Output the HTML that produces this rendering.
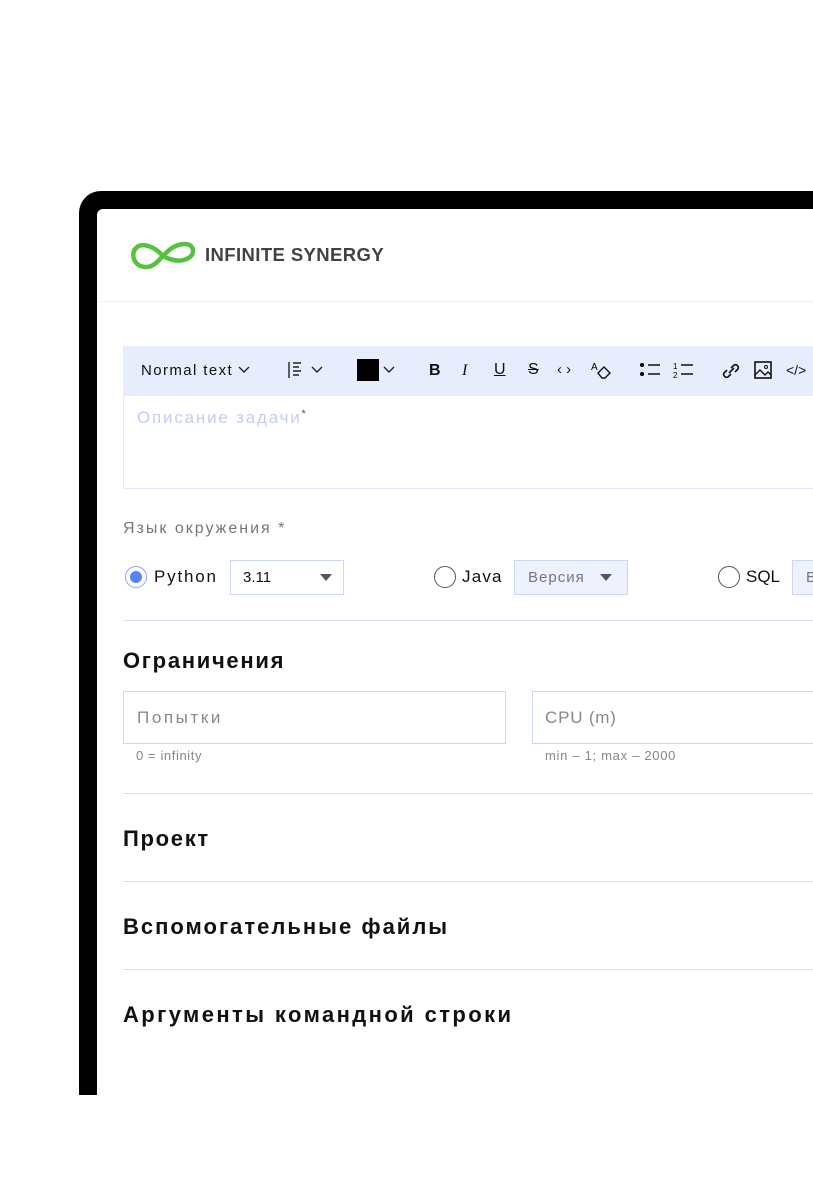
<!DOCTYPE html>
<html><head><meta charset="utf-8"><style>
*{margin:0;padding:0;box-sizing:border-box}
body{width:813px;height:1200px;background:#fff;position:relative;overflow:hidden;font-family:"Liberation Sans","DejaVu Sans",sans-serif}
.a{position:absolute}
.frame{left:79px;top:191px;width:800px;height:904px;background:#000;border-top-left-radius:22px}
.inner{left:97px;top:209px;width:760px;height:886px;background:#fff;border-top-left-radius:6px}
.t{position:absolute;white-space:nowrap;line-height:1}
.h{font-weight:bold;font-size:22px;color:#111;letter-spacing:1.7px}
.line{position:absolute;left:123px;width:700px;height:1px;background:#d9e1fa}
.radio{position:absolute;width:22px;height:22px;border:1.5px solid #555;border-radius:50%}
.sel{position:absolute;height:35px;border:1.5px solid #ccd7f8;top:560px}
.tri{position:absolute;width:0;height:0;border-left:6px solid transparent;border-right:6px solid transparent;border-top:7px solid #555;top:574px}
.ic{position:absolute;top:360px}
</style></head><body>
<div class="a frame"></div>
<div class="a inner"></div>
<svg class="a" style="left:130px;top:240px" width="66" height="32" viewBox="0 0 66 32"><path d="M33 16 C24 6 12 2 6 8 C0 14 4 27 16 27 C24 27 29 20 33 16 C38 11 44 4 55 4 C64 4 65 13 60 17 C55 21 45 23 33 16" fill="none" stroke="#55c33b" stroke-width="4.5" stroke-linecap="round"/></svg>
<div class="t" style="left:205px;top:246px;font-size:18.5px;font-weight:bold;color:#3f4247;letter-spacing:0.4px">INFINITE SYNERGY</div>
<div class="a" style="left:97px;top:301px;width:716px;height:1px;background:#eef0f3"></div>
<div class="a" style="left:123px;top:346px;width:700px;height:143px;border:1px solid #e3e9f8"></div>
<div class="a" style="left:123px;top:346px;width:700px;height:50px;background:#e8edfd"></div>
<div class="t" style="left:141px;top:363px;font-size:15px;color:#111;letter-spacing:1.4px">Normal text</div>
<svg class="ic" style="left:237px" width="14" height="20"><path d="M2 7l5 5 5-5" fill="none" stroke="#222" stroke-width="1.4"/></svg>
<svg class="ic" style="left:287px" width="40" height="20"><path d="M2 2v16M6 3h8M6 7h6M6 11h8M6 15h6" stroke="#222" stroke-width="1.4"/><path d="M25 7l5 5 5-5" fill="none" stroke="#222" stroke-width="1.4"/></svg>
<div class="a" style="left:357px;top:359px;width:22px;height:22px;background:#000"></div>
<svg class="ic" style="left:383px" width="14" height="20"><path d="M1 7l5 5 5-5" fill="none" stroke="#222" stroke-width="1.4"/></svg>
<div class="t" style="left:429px;top:363px;font-size:16px;font-weight:bold;color:#111">B</div>
<div class="t" style="left:462px;top:363px;font-size:16px;font-style:italic;color:#111;font-family:'Liberation Serif',serif">I</div>
<div class="t" style="left:494px;top:362px;font-size:16px;color:#111;text-decoration:underline">U</div>
<div class="t" style="left:528px;top:362px;font-size:16px;color:#111;text-decoration:line-through">S</div>
<div class="t" style="left:557px;top:362px;font-size:15px;color:#111">‹ ›</div>
<svg class="ic" style="left:590px" width="22" height="22"><text x="1" y="10" font-size="10" font-family="Liberation Sans">A</text><path d="M8 13l6-6 6 6-5 5h-3z" fill="none" stroke="#111" stroke-width="1.4"/></svg>
<svg class="ic" style="left:639px" width="24" height="20"><circle cx="3" cy="5" r="2"/><circle cx="3" cy="14" r="2"/><path d="M9 5h12M9 14h12" stroke="#111" stroke-width="1.5"/></svg>
<svg class="ic" style="left:672px" width="24" height="20"><text x="1" y="9" font-size="8">1</text><text x="1" y="18" font-size="8">2</text><path d="M9 5h12M9 14h12" stroke="#111" stroke-width="1.5"/></svg>
<svg class="ic" style="left:719px" width="24" height="22"><path d="M10 13l5-5M8 10l-3 3a3 3 0 004 4l3-3M16 12l3-3a3 3 0 00-4-4l-3 3" fill="none" stroke="#111" stroke-width="1.6"/></svg>
<svg class="ic" style="left:753px" width="22" height="22"><rect x="2" y="2" width="16" height="16" fill="none" stroke="#111" stroke-width="1.6"/><path d="M2 15l5-5 5 5 3-3 3 3" fill="none" stroke="#111" stroke-width="1.4"/><circle cx="13" cy="7" r="1.5" fill="none" stroke="#111"/></svg>
<div class="t" style="left:786px;top:363px;font-size:14px;color:#111">&lt;/&gt;</div>
<div class="t" style="left:137px;top:409px;font-size:17px;color:#c5cdf5;letter-spacing:1.8px">Описание задачи<span style="font-size:11px;color:#555;vertical-align:top">*</span></div>
<div class="t" style="left:123px;top:521px;font-size:16px;color:#777;letter-spacing:2px">Язык окружения *</div>
<div class="radio" style="left:125px;top:566px;border-color:#8aa3f7"></div>
<div class="a" style="left:130px;top:571px;width:12px;height:12px;border-radius:50%;background:#5b82f8"></div>
<div class="t" style="left:154px;top:568px;font-size:17px;color:#111;letter-spacing:1.8px">Python</div>
<div class="sel" style="left:230px;width:114px"></div>
<div class="t" style="left:243px;top:570px;font-size:15px;color:#111">3.11</div>
<div class="tri" style="left:320px"></div>
<div class="radio" style="left:434px;top:566px"></div>
<div class="t" style="left:462px;top:568px;font-size:17px;color:#111;letter-spacing:1.2px">Java</div>
<div class="sel" style="left:514px;width:114px;background:#eef2fd"></div>
<div class="t" style="left:528px;top:570px;font-size:15px;color:#777;letter-spacing:1px">Версия</div>
<div class="tri" style="left:600px"></div>
<div class="radio" style="left:718px;top:566px"></div>
<div class="t" style="left:746px;top:568px;font-size:17px;color:#111">SQL</div>
<div class="sel" style="left:792px;width:60px;background:#eef2fd"></div>
<div class="t" style="left:806px;top:570px;font-size:15px;color:#777">В</div>
<div class="line" style="top:620px"></div>
<div class="t h" style="left:123px;top:650px">Ограничения</div>
<div class="a" style="left:123px;top:691px;width:383px;height:53px;border:1.5px solid #ccd7f8"></div>
<div class="t" style="left:137px;top:709px;font-size:17px;color:#888;letter-spacing:2.6px">Попытки</div>
<div class="t" style="left:136px;top:749px;font-size:13px;color:#888;letter-spacing:0.6px">0 = infinity</div>
<div class="a" style="left:532px;top:691px;width:300px;height:53px;border:1.5px solid #ccd7f8"></div>
<div class="t" style="left:545px;top:709px;font-size:17px;color:#888;letter-spacing:0.8px">CPU (m)</div>
<div class="t" style="left:545px;top:749px;font-size:13px;color:#888;letter-spacing:0.7px">min – 1; max – 2000</div>
<div class="line" style="top:793px"></div>
<div class="t h" style="left:123px;top:828px">Проект</div>
<div class="line" style="top:881px"></div>
<div class="t h" style="left:123px;top:916px;letter-spacing:2px">Вспомогательные файлы</div>
<div class="line" style="top:969px"></div>
<div class="t h" style="left:123px;top:1004px;letter-spacing:2.4px">Аргументы командной строки</div>
</body></html>
